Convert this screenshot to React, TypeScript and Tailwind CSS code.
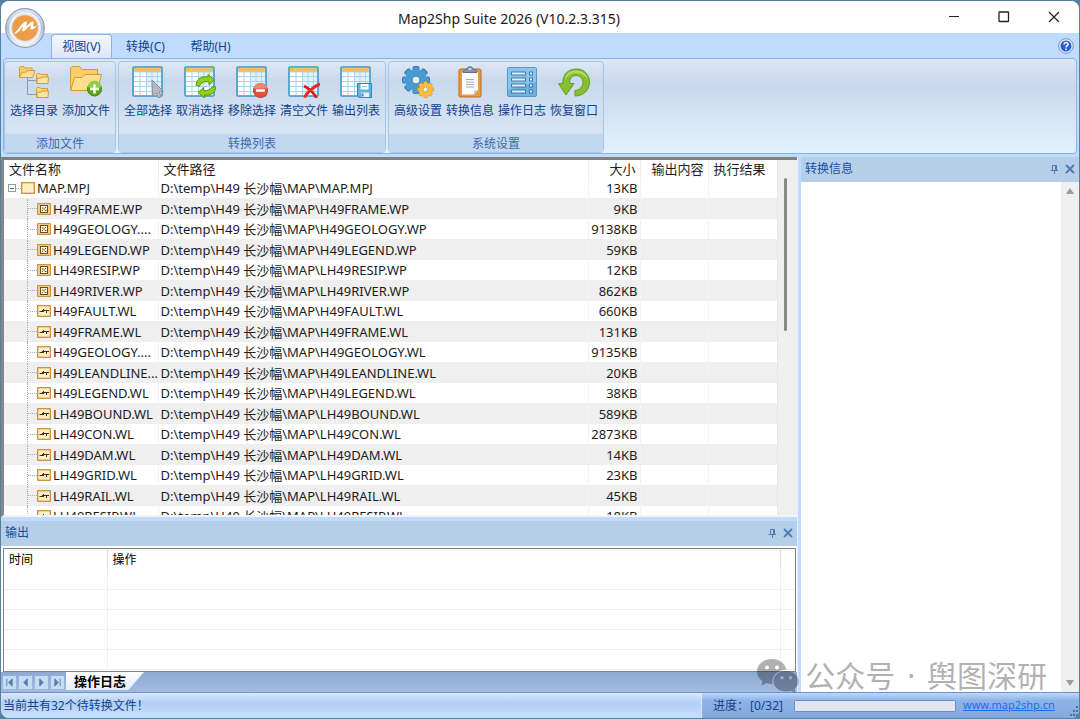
import { ReactNode, useState } from "react";

interface FileRow {
  name: string;
  file: string;
  size: string;
  type: "wp" | "wl";
}

const files: FileRow[] = [
  { name: "H49FRAME.WP", file: "H49FRAME.WP", size: "9KB", type: "wp" },
  { name: "H49GEOLOGY....", file: "H49GEOLOGY.WP", size: "9138KB", type: "wp" },
  { name: "H49LEGEND.WP", file: "H49LEGEND.WP", size: "59KB", type: "wp" },
  { name: "LH49RESIP.WP", file: "LH49RESIP.WP", size: "12KB", type: "wp" },
  { name: "LH49RIVER.WP", file: "LH49RIVER.WP", size: "862KB", type: "wp" },
  { name: "H49FAULT.WL", file: "H49FAULT.WL", size: "660KB", type: "wl" },
  { name: "H49FRAME.WL", file: "H49FRAME.WL", size: "131KB", type: "wl" },
  { name: "H49GEOLOGY....", file: "H49GEOLOGY.WL", size: "9135KB", type: "wl" },
  { name: "H49LEANDLINE...", file: "H49LEANDLINE.WL", size: "20KB", type: "wl" },
  { name: "H49LEGEND.WL", file: "H49LEGEND.WL", size: "38KB", type: "wl" },
  { name: "LH49BOUND.WL", file: "LH49BOUND.WL", size: "589KB", type: "wl" },
  { name: "LH49CON.WL", file: "LH49CON.WL", size: "2873KB", type: "wl" },
  { name: "LH49DAM.WL", file: "LH49DAM.WL", size: "14KB", type: "wl" },
  { name: "LH49GRID.WL", file: "LH49GRID.WL", size: "23KB", type: "wl" },
  { name: "LH49RAIL.WL", file: "LH49RAIL.WL", size: "45KB", type: "wl" },
  { name: "LH49RESIP.WL", file: "LH49RESIP.WL", size: "18KB", type: "wl" },
];

/* ---------- icons ---------- */

const Icon = ({ children }: { children: ReactNode }) => (
  <svg viewBox="0 0 32 32" className="h-8 w-8" fill="none" aria-hidden="true">
    {children}
  </svg>
);

const SmallFolder = () => (
  <g stroke="#d69a3c" strokeLinejoin="round">
    <path d="M.5 10.5V1.5L1.5.5H4L5 1.5H11.5V10.5Z" fill="#fbd778" />
    <path d="M1 10.5V5.5L5 5L6 4H12.5L12 10.5Z" fill="#fde3a0" />
  </g>
);

const TreeIcon = () => (
  <Icon>
    <path d="M9.500 12V28.500H18M9.500 14.500H18" stroke="#8c9cb0" />
    <g transform="translate(1 0)">
      <path d="M.5 11.500V1.500L2 .5H5L6 2H13V5" fill="#f9cd68" stroke="#d69a3c" />
      <path d="M.5 11.500L3 6.500L7 6L9 4.500H16L13.500 11.500Z" fill="#fddf8e" stroke="#d69a3c" />
    </g>
    <g transform="translate(18 7)"><SmallFolder /></g>
    <g transform="translate(18 21)"><SmallFolder /></g>
  </Icon>
);

const AddFolderIcon = () => (
  <Icon>
    <path d="M.5 24V2L2 .5H9.500L12 3.500H27.500V9" fill="#f9cd68" stroke="#d69a3c" />
    <path d="M.7 24.500L4.500 11.500H12L15 8.500H31.500L27 24.500Z" fill="#fddf8e" stroke="#d69a3c" strokeLinejoin="round" />
    <circle cx="24.500" cy="23" r="7" fill="#5aa81a" stroke="#3f8510" />
    <path d="M18 21a6.500 6.500 0 0 1 13 0q-6 3-13 0Z" fill="#8fce45" />
    <path d="M24.500 18.500V27.500M20 23H29" stroke="#fff" strokeWidth="2.400" />
  </Icon>
);

const GridBase = () => (
  <>
    <rect x="1" y="1" width="29" height="29" rx="1" fill="#fff" stroke="#3c96c8" strokeWidth="1.600" />
    <path d="M2 2H29V5.500H2Z" fill="#f6bf52" />
    <path d="M14 6H29V20H14Z" fill="#e0f2fb" />
    <path d="M2 10.500H29M2 15.500H29M2 20.500H29M2 25.500H29M8 2V29M14.500 2V29M20 2V29M25.500 2V29" stroke="#a5d5ee" />
    <path d="M2 5.800H29" stroke="#8fc9e8" />
  </>
);

const SelectAllIcon = () => (
  <Icon>
    <GridBase />
    <path d="M20 14L31.500 25.500L27 25.800L29.500 30.500L26.500 32L24 27L20.500 30Z" fill="#b5b9bf" stroke="#8a8f96" />
  </Icon>
);

const UnselectIcon = () => (
  <Icon>
    <GridBase />
    <g fill="#8ed018" stroke="#55970e" strokeLinejoin="round">
      <path d="M12 19C12.500 12.500 18 10 24 11V8.500L30.500 14L25 19V16C20.500 15 17 16 15.500 20.500Z" />
      <path d="M32 21C31 27.500 26 30 20.500 29V32L14 26.500L19.500 21.500V24.500C24 25 26.500 23.500 28 21Z" />
    </g>
  </Icon>
);

const RemoveIcon = () => (
  <Icon>
    <GridBase />
    <circle cx="24.500" cy="24.500" r="7" fill="#e8503a" stroke="#c9382a" />
    <path d="M18 22.500a6.500 5.500 0 0 1 13 0Z" fill="#f28670" />
    <path d="M20 24.500H29" stroke="#fff" strokeWidth="2.600" />
  </Icon>
);

const ClearIcon = () => (
  <Icon>
    <GridBase />
    <path d="M16 20C20 22 26 27 28.500 32" stroke="#d81b1b" strokeWidth="3" />
    <path d="M32 18C27 20 19 26 16.500 31.500" stroke="#ea2a2a" strokeWidth="3" />
  </Icon>
);

const ExportIcon = () => (
  <Icon>
    <GridBase />
    <path d="M17.500 17.500H31.500V31.500H19L17.500 30Z" fill="#5fb2e0" stroke="#2f86bd" />
    <path d="M20.500 18H28.500V23.500H20.500Z" fill="#fff" />
    <path d="M21 26.500H29V31H21Z" fill="#e5f2fa" />
    <path d="M22.500 27.500V30.500" stroke="#2f86bd" strokeWidth="2" />
    <path d="M22 20.500H27" stroke="#9cc9e4" />
  </Icon>
);

const Gear = ({ fill, stroke }: { fill: string; stroke: string }) => (
  <g stroke={stroke}>
    {[0, 45, 90, 135].map((deg) => (
      <rect key={deg} x="-3" y="-13.500" width="6" height="27" rx="1" fill={fill} transform={`rotate(${deg})`} />
    ))}
    <circle r="10.500" fill={fill} stroke="none" />
    <circle r="4" fill="#e9f1fa" />
  </g>
);

const SettingsIcon = () => (
  <Icon>
    <g transform="translate(14 14)"><Gear fill="#4a9ad2" stroke="#3780bb" /></g>
    <g transform="translate(23.500 23.500) scale(.6)"><Gear fill="#fcbd3c" stroke="#d58a1c" /></g>
  </Icon>
);

const ClipboardIcon = () => (
  <Icon>
    <rect x="5" y="3" width="22" height="28" rx="1.500" fill="#e89a3e" stroke="#b96d20" />
    <path d="M8 6H24V24L20 28.500H8Z" fill="#fbfbfd" />
    <path d="M24 24H20V28.500Z" fill="#c9d0db" />
    <path d="M12 13.500H20M12 16H20M12 18.500H20M12 21H20" stroke="#a5acbb" />
    <path d="M9 6.500C9 4 12 3.500 13 3C13.500 0 18.500 0 19 3C20 3.500 23 4 23 6.500Z" fill="#8593ad" stroke="#62708e" />
    <path d="M14.500 3H17.500" stroke="#dfe5ef" strokeWidth="1.500" />
  </Icon>
);

const LogIcon = () => (
  <Icon>
    <rect x="1.500" y="1.500" width="29" height="29" rx="1.500" fill="#70b0dd" stroke="#5a97c9" />
    <path d="M2 2H30V16L2 24Z" fill="#8cc3e8" />
    {[6, 12, 18, 24].map((y) => (
      <g key={y} fill="#e3f1fb" stroke="#3d7ab0">
        <rect x="5.500" y={y} width="14" height="3" />
        <rect x="23.500" y={y} width="3" height="3" />
      </g>
    ))}
  </Icon>
);

const RestoreIcon = () => (
  <Icon>
    <path
      d="M.5 17.500H5C4 9 10 3 18.500 3C26 3 31.500 9 31.500 16C31.500 24 25.500 30 17 30V24.500C22 24 25 20.500 25 16.500C25 12.500 22 9.500 18 9.500C13.500 9.500 11 13 12 17.500H16L8 29Z"
      fill="#86bf2f"
      stroke="#619a22"
      strokeLinejoin="round"
    />
    <path d="M7 14C7 8.500 12 4.500 18 4.500C24 4.500 29 8 30 13C22 5 12 5 7 14Z" fill="#b5da6c" />
  </Icon>
);

const LogoIcon = () => (
  <svg viewBox="0 0 40 40" className="h-10 w-10" aria-hidden="true">
    <defs>
      <linearGradient id="ring" x1="0" y1="0" x2="0" y2="1">
        <stop offset="0" stopColor="#e3e8f0" />
        <stop offset=".5" stopColor="#b4c0d3" />
        <stop offset="1" stopColor="#f4f7fb" />
      </linearGradient>
    </defs>
    <circle cx="20" cy="20" r="19.300" fill="url(#ring)" stroke="#929eb1" strokeWidth="1.200" />
    <circle cx="20" cy="20" r="15" fill="#dbe3ee" stroke="#f2f6fb" strokeWidth="1.500" />
    <circle cx="20" cy="20" r="12.800" fill="#ee9c46" />
    <path
      d="M8.500 25.500C13 23.500 16.500 14 21 13.500C23 13.500 21.500 17 21 18.500C23.500 16.500 26 13 28 13.500C29.500 14 27.500 17.500 28.500 18.500C29.500 19 31 18 32 17.500C30 21 26.500 22.500 25.500 21C25 20 26 18 25.500 17.500C22.500 19 20.500 23.500 18 23.500C16 23 18.500 19.500 18 18.500C15.500 21 13 26.500 8.500 25.500Z"
      fill="#fff"
    />
  </svg>
);

const FileIcon = ({ type }: { type: "mpj" | "wp" | "wl" }) => (
  <svg viewBox="0 0 14 12" className="h-3 w-3.5 shrink-0" fill="none" aria-hidden="true">
    <rect x=".7" y=".7" width="12.600" height="10.600" fill="#fdeec6" stroke="#c48a34" strokeWidth="1.200" />
    {type === "wp" && (
      <>
        <rect x="1.500" y="1.500" width="11" height="9" fill="#ecca85" />
        <rect x="3.500" y="2.500" width="7" height="7" fill="#fff6dc" stroke="#6b4a1d" />
        <path d="M5 5H6.500M8 4.500H9M6.500 6H8M5 7.500H6M8 7.500H9.500" stroke="#6b4a1d" />
      </>
    )}
    {type === "wl" && <path d="M2.500 6.500H7M6.500 4V7M5 5.500H12M9.500 5V8" stroke="#3b3020" />}
  </svg>
);

const PinIcon = () => (
  <svg viewBox="0 0 10 10" className="h-2.5 w-2.5" fill="none" stroke="#4d7db5" aria-hidden="true">
    <path d="M3.500 6.500V1.500H7.500V6.500M1.500 6.500H9M5.500 6.500V10M6.500 1.500V6.500" />
  </svg>
);

const CloseIcon = () => (
  <svg viewBox="0 0 10 10" className="h-2.5 w-2.5" fill="none" stroke="#4d7db5" strokeWidth="1.900" aria-hidden="true">
    <path d="M1 1L9 9M9 1L1 9" />
  </svg>
);

/* ---------- shell ---------- */

const ribbonGroups = [
  {
    title: "添加文件",
    items: [
      { label: "选择目录", icon: <TreeIcon /> },
      { label: "添加文件", icon: <AddFolderIcon /> },
    ],
  },
  {
    title: "转换列表",
    items: [
      { label: "全部选择", icon: <SelectAllIcon /> },
      { label: "取消选择", icon: <UnselectIcon /> },
      { label: "移除选择", icon: <RemoveIcon /> },
      { label: "清空文件", icon: <ClearIcon /> },
      { label: "输出列表", icon: <ExportIcon /> },
    ],
  },
  {
    title: "系统设置",
    items: [
      { label: "高级设置", icon: <SettingsIcon /> },
      { label: "转换信息", icon: <ClipboardIcon /> },
      { label: "操作日志", icon: <LogIcon /> },
      { label: "恢复窗口", icon: <RestoreIcon /> },
    ],
  },
];

const TitleBar = () => (
  <header className="flex h-8 shrink-0 bg-white">
    <h1 className="flex-1 pl-[88px] pt-1 text-center text-sm leading-7 text-[#1a1a1a]">
      Map2Shp Suite 2026 (V10.2.3.315)
    </h1>
    <div className="flex text-[#222]">
      <button aria-label="最小化" className="flex w-[50px] items-center justify-center">
        <svg viewBox="0 0 12 12" className="h-3 w-3" stroke="currentColor"><path d="M1 5.500H11" /></svg>
      </button>
      <button aria-label="最大化" className="flex w-[50px] items-center justify-center">
        <svg viewBox="0 0 12 12" className="h-3 w-3" fill="none" stroke="currentColor" strokeWidth="1.300">
          <rect x="1" y="1" width="9.500" height="9.500" rx=".5" />
        </svg>
      </button>
      <button aria-label="关闭" className="flex w-[50px] items-center justify-center">
        <svg viewBox="0 0 12 12" className="h-3 w-3" stroke="currentColor" strokeWidth="1.200">
          <path d="M1 1L11 11M11 1L1 11" />
        </svg>
      </button>
    </div>
  </header>
);

const tabs = ["视图(V)", "转换(C)", "帮助(H)"];

const TabStrip = () => {
  const [active, setActive] = useState(0);
  return (
    <nav className="flex h-[25px] shrink-0 items-end bg-[#bfdbff] pl-[50px] pr-[5px] text-xs text-[#15428b]">
      {tabs.map((tab, i) => (
        <button
          key={tab}
          onClick={() => setActive(i)}
          className={
            i === active
              ? "mr-px h-6 w-[61px] rounded-t border border-b-0 border-[#8db2e3] bg-linear-to-b from-[#f3f8fe] to-[#dce7f5] pt-px"
              : "h-6 w-[65px] pt-0.5"
          }
        >
          {tab}
        </button>
      ))}
      <button aria-label="帮助" className="mb-1 ml-auto">
        <svg viewBox="0 0 16 16" className="h-4 w-4" fill="none" aria-hidden="true">
          <circle cx="8" cy="8" r="7.300" fill="#e7ecf5" stroke="#8391aa" />
          <circle cx="8" cy="8" r="5.500" fill="#2460d8" />
          <path d="M6 6.500C6 3.800 10.200 4 10 6.500C9.800 8 8 7.800 8 9.500M8 10.500V12" stroke="#fff" strokeWidth="1.500" />
        </svg>
      </button>
    </nav>
  );
};

const Ribbon = () => (
  <section className="shrink-0 bg-[#bfdbff] px-0.5">
    <div className="flex h-24 gap-0.5 rounded border border-[#8db2e3] bg-linear-to-b from-[#dbe6f4] via-[#c8d9ed] via-30% to-[#e1f2ff] pt-0.5">
      {ribbonGroups.map((group) => (
        <div
          key={group.title}
          className="flex h-[92px] flex-col rounded-sm border border-[#a8c4e4] bg-linear-to-b from-[#dee8f5] via-[#c9d9ed] via-20% to-[#dbe8f6]"
        >
          <div className="flex flex-1 items-start px-[3px] pt-1">
            {group.items.map((item) => (
              <button key={item.label} className="flex w-[52px] flex-col items-center whitespace-nowrap">
                {item.icon}
                <span className="mt-1 text-xs leading-[18px] text-[#15428b]">{item.label}</span>
              </button>
            ))}
          </div>
          <div className="h-[18px] bg-[#c1d8f0] text-center text-xs leading-5 text-[#3e6aaa]">{group.title}</div>
        </div>
      ))}
    </div>
  </section>
);

const PanelHeader = ({ title }: { title: string }) => (
  <div className="flex h-[25px] shrink-0 items-center bg-[#b7cee9] pb-px pl-1 pr-1 text-xs text-[#15509e]">
    <h2 className="flex-1">{title}</h2>
    <button aria-label={`固定${title}`} className="mr-1.5"><PinIcon /></button>
    <button aria-label={`关闭${title}`}><CloseIcon /></button>
  </div>
);

const FileTable = () => (
  <div className="flex min-h-0 flex-1 overflow-hidden border-b-2 border-l-3 border-t-3 border-b-[#f4f4f4] border-l-[#868686] border-t-[#808080] bg-white">
    <div className="min-w-0 flex-1 overflow-hidden">
      <table className="w-full table-fixed whitespace-nowrap text-[13px] leading-5 text-[#1c1c1c]">
        <colgroup>
          <col className="w-[154px]" />
          <col />
          <col className="w-[52px]" />
          <col className="w-[68px]" />
          <col className="w-[69px]" />
        </colgroup>
        <thead className="leading-[18px] *:*:font-normal">
          <tr className="h-[18px] text-left">
            <th className="pl-[5px]">文件名称</th>
            <th className="border-l border-[#eee] pl-[5px]">文件路径</th>
            <th className="border-l border-[#eee] pr-1 text-right">大小</th>
            <th className="border-l border-[#eee] pl-[11px]">输出内容</th>
            <th className="border-l border-[#eee] pl-[5px]">执行结果</th>
          </tr>
        </thead>
        <tbody className="*:odd:h-[20px] *:even:h-[21px] *:even:bg-[#efefef]">
          <tr>
            <td className="p-0">
              <div className="flex h-5 items-center pl-1">
                <button aria-label="折叠 MAP.MPJ" className="flex h-2 w-2 items-center justify-center border border-[#9a9a9a] bg-white">
                  <span className="h-px w-1 bg-[#3c62a8]" />
                </button>
                <span className="w-[5px] border-t border-dotted border-[#aaa]" />
                <FileIcon type="mpj" />
                <span className="pl-0.5">MAP.MPJ</span>
              </div>
            </td>
            <td className="border-l border-[#f2f2f2] pl-0.5">D:\temp\H49 长沙幅\MAP\MAP.MPJ</td>
            <td className="border-l border-[#f2f2f2] pr-0.5 text-right">13KB</td>
            <td className="border-l border-[#f2f2f2]" />
            <td className="border-l border-[#f2f2f2]" />
          </tr>
          {files.map((row) => (
            <tr key={row.file}>
              <td className="p-0">
                <div className="flex h-5 items-center pl-[23px]">
                  <span className="h-5 shrink-0 border-l border-dotted border-[#aaa]" />
                  <span className="w-[9px] shrink-0 border-t border-dotted border-[#aaa]" />
                  <FileIcon type={row.type} />
                  <span className="pl-0.5">{row.name}</span>
                </div>
              </td>
              <td className="border-l border-[#f2f2f2] pl-0.5">D:\temp\H49 长沙幅\MAP\{row.file}</td>
              <td className="border-l border-[#f2f2f2] pr-0.5 text-right">{row.size}</td>
              <td className="border-l border-[#f2f2f2]" />
              <td className="border-l border-[#f2f2f2]" />
            </tr>
          ))}
        </tbody>
      </table>
    </div>
    <div className="flex w-5 justify-center border-l border-[#e6e6e6] bg-[#efefef] pr-1 pt-[18px]">
      <div className="h-[153px] w-[3px] rounded-full bg-[#8a8a8a]" />
    </div>
  </div>
);

const LogTable = () => (
  <div className="h-[126px] shrink-0 bg-white pl-0.5 pr-px pt-0.5">
    <div className="h-full overflow-hidden border border-[#828282]">
      <table className="w-full table-fixed text-xs">
        <colgroup>
          <col className="w-[103px]" />
          <col />
          <col className="w-[15px]" />
        </colgroup>
        <thead>
          <tr className="h-5 text-left *:pt-0.5 *:font-normal">
            <th className="pl-[5px]">时间</th>
            <th className="border-l border-[#ddd] pl-[5px]">操作</th>
            <th className="border-l border-[#ddd]" />
          </tr>
        </thead>
        <tbody>
          {[0, 1, 2, 3, 4].map((n) => (
            <tr key={n} className="h-5 border-b border-[#f0f0f0]">
              <td />
              <td className="border-l border-[#f0f0f0]" />
              <td className="border-l border-[#f0f0f0]" />
            </tr>
          ))}
        </tbody>
      </table>
    </div>
  </div>
);

const navButtons = [
  { label: "第一页", path: "M2 1V9M8 1L4 5L8 9Z" },
  { label: "上一页", path: "M7 1L3 5L7 9Z" },
  { label: "下一页", path: "M3 1L7 5L3 9Z" },
  { label: "最后一页", path: "M8 1V9M2 1L6 5L2 9Z" },
];

const LogTabs = () => (
  <div className="flex h-5 shrink-0 bg-linear-to-b from-[#8faad2] to-[#a2bbe0]">
    <div className="flex items-center gap-[3px] pl-0.5">
      {navButtons.map((btn) => (
        <button key={btn.label} aria-label={btn.label} className="flex h-[13px] w-[13px] items-center justify-center bg-[#c8dbf1]">
          <svg viewBox="0 0 10 10" className="h-[9px] w-[9px]" fill="#5582b8" stroke="#5582b8" aria-hidden="true">
            <path d={btn.path} />
          </svg>
        </button>
      ))}
    </div>
    <button className="ml-0.5 h-[18px] w-[78px] bg-linear-to-b from-white to-[#e4eefb] pl-2 text-left text-[13px] leading-[18px] font-bold text-black [clip-path:polygon(0_0,100%_0,80%_100%,0_100%)]">
      操作日志
    </button>
  </div>
);

const InfoPanel = () => (
  <aside className="flex w-[278px] shrink-0 flex-col bg-white">
    <PanelHeader title="转换信息" />
    <div className="flex flex-1 justify-end">
      <div className="flex w-[18px] flex-col items-center justify-between bg-[#efefef] py-1.5 pr-px">
        <button aria-label="向上滚动">
          <svg viewBox="0 0 8 6" className="h-1.5 w-2" fill="#9b9b9b"><path d="M4 0L8 6H0Z" /></svg>
        </button>
        <button aria-label="向下滚动">
          <svg viewBox="0 0 8 6" className="h-1.5 w-2" fill="#9b9b9b"><path d="M4 6L8 0H0Z" /></svg>
        </button>
      </div>
    </div>
  </aside>
);

const StatusBar = () => (
  <footer className="flex h-[26px] shrink-0 border-t border-[#6b93cf] text-xs text-[#15428b]">
    <p className="flex-1 bg-linear-to-b from-[#dbe9fc] via-[#b0cff7] via-40% to-[#c9dffc] pl-0.5 leading-[26px]">
      当前共有32个待转换文件！
    </p>
    <div className="flex w-[378px] items-center border-l border-[#dce9fb] bg-linear-to-b from-[#bfd8f9] via-[#8db3e8] via-30% to-[#86a9dc] pl-[11px]">
      <label htmlFor="progress" className="w-[81px]">
        进度：<span className="pl-px">[0/32]</span>
      </label>
      <progress
        id="progress"
        value={0}
        max={32}
        className="h-3 w-[162px] appearance-none rounded-xs border border-[#6f8fbf] bg-[#dfe4ee] [&::-webkit-progress-bar]:bg-[#dfe4ee]"
      />
      <a href="#home" className="ml-[7px] text-[11px] text-[#1670e8] underline">
        www.map2shp.cn
      </a>
      <svg viewBox="0 0 10 10" className="mb-0.5 ml-auto h-2.5 w-2.5 self-end" fill="#4a6fa8" aria-hidden="true">
        <path d="M7 0h2v2h-2zM4 4h2v2h-2zM7 4h2v2h-2zM1 8h2v2h-2zM4 8h2v2h-2zM7 8h2v2h-2z" />
      </svg>
    </div>
  </footer>
);

const Watermark = () => (
  <div className="pointer-events-none absolute bottom-6 right-8 flex items-center text-black opacity-30">
    <svg viewBox="0 0 42 34" className="mr-1.5 h-[34px] w-[42px]" fill="currentColor" fillRule="evenodd" aria-hidden="true">
      <path d="M15 0C6.500 0 0 5.500 0 12.500C0 16.500 2 20 5.500 22.300L4.500 26.500L9.500 24C11.500 24.600 13 25 15.500 25C14 16 22 10.500 29.500 10.800C28 4.500 22.500 0 15 0ZM10 6.500a2 2 0 1 1 0 4a2 2 0 1 1 0-4ZM20 6.500a2 2 0 1 1 0 4a2 2 0 1 1 0-4Z" />
      <path d="M29 12C22 12 16.500 16.500 16.500 22.300C16.500 28 22 32.500 29 32.500C31 32.500 32.500 32.200 34 31.700L38.500 34L37.500 30C40.200 28 41.500 25.500 41.500 22.300C41.500 16.500 36 12 29 12ZM25 17a1.700 1.700 0 1 1 0 3.400a1.700 1.700 0 1 1 0-3.400ZM33.500 17a1.700 1.700 0 1 1 0 3.400a1.700 1.700 0 1 1 0-3.400Z" />
    </svg>
    <span className="whitespace-pre text-[30px] leading-9">
      公众号<span className="px-1"> ·</span> 舆图深研
    </span>
  </div>
);

export default function App() {
  return (
    <div className="h-screen bg-[#55829b] p-px font-['Noto_Sans','Noto_Sans_CJK_SC',sans-serif]">
      <div className="relative flex h-full flex-col overflow-hidden rounded-lg bg-[#bfdbff]">
        <TitleBar />
        <TabStrip />
        <Ribbon />
        <div className="absolute left-1 top-[7px]">
          <LogoIcon />
        </div>
        <main className="flex min-h-0 flex-1 pt-[3px]">
          <div className="mr-[3px] flex min-w-0 flex-1 flex-col border-r border-[#e6f0ff]">
            <FileTable />
            <div className="mt-1">
              <PanelHeader title="输出" />
            </div>
            <LogTable />
            <LogTabs />
          </div>
          <InfoPanel />
        </main>
        <StatusBar />
        <Watermark />
      </div>
    </div>
  );
}
